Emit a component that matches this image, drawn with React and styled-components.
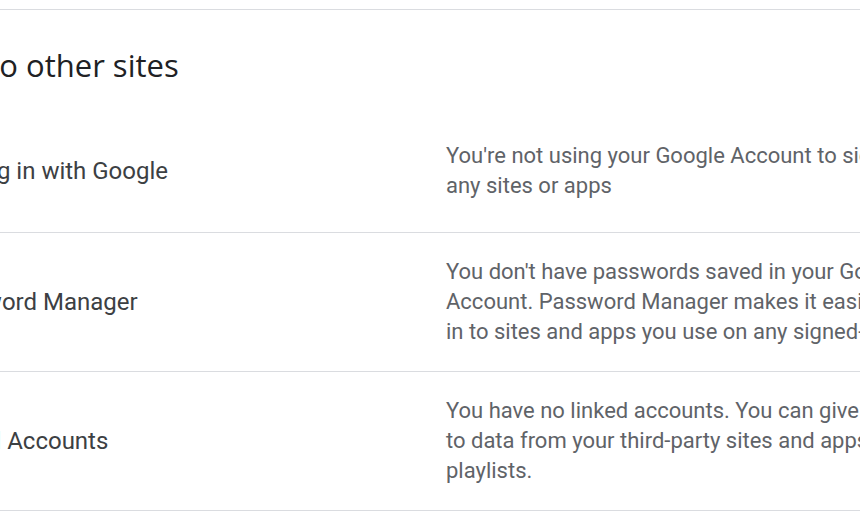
import React from "react";
import styled, { createGlobalStyle } from "styled-components";

const Global = createGlobalStyle`
  html, body { margin: 0; padding: 0; background: #ffffff; }
  body { font-family: Roboto, "Noto Sans", Arial, sans-serif; }
`;

const Viewport = styled.div`
  width: 860px;
  height: 520px;
  overflow: hidden;
  background: #ffffff;
`;

const Card = styled.section`
  margin: 9px 0 0 -102px;
  width: 1400px;
  border-top: 1px solid #dadce0;
`;

const Header = styled.header`
  height: 107px;
  box-sizing: border-box;
  padding-top: 35px;
`;

const Title = styled.h2`
  margin: 0 0 0 ${(p) => p.$indent}px;
  font-family: "Open Sans", Roboto, sans-serif;
  font-weight: 400;
  font-size: 31px;
  line-height: 40px;
  color: #202124;
  white-space: nowrap;
`;

const Row = styled.div`
  display: grid;
  grid-template-columns: 515px 1fr;
  align-items: center;
  padding: 24px 36px ${(p) => p.$bottom}px 33px;
  border-bottom: 1px solid #dadce0;
`;

const Label = styled.div`
  font-size: 24px;
  line-height: 36px;
  color: #3c4043;
  white-space: nowrap;
`;

const Desc = styled.div`
  font-size: 22px;
  line-height: 30px;
  color: #5f6368;
  width: ${(p) => p.$width}px;
`;

const rows = [
  {
    label: "Signing in with Google",
    desc: "You're not using your Google Account to sign in to any sites or apps",
    bottom: 31,
    width: 515,
  },
  {
    label: "Password Manager",
    desc:
      "You don't have passwords saved in your Google Account. Password Manager makes it easier to sign in to sites and apps you use on any signed-in device.",
    bottom: 24,
    width: 515,
  },
  {
    label: "Linked Accounts",
    desc:
      "You have no linked accounts. You can give Google access to data from your third-party sites and apps, like your playlists.",
    bottom: 24,
    width: 580,
  },
];

export default function App() {
  return (
    <>
      <Global />
      <Viewport>
        <Card>
          <Header>
            <Title $indent={-57}>Signing in to other sites</Title>
          </Header>
          {rows.map((r) => (
            <Row key={r.label} $bottom={r.bottom}>
              <Label>{r.label}</Label>
              <Desc $width={r.width}>{r.desc}</Desc>
            </Row>
          ))}
        </Card>
      </Viewport>
    </>
  );
}
